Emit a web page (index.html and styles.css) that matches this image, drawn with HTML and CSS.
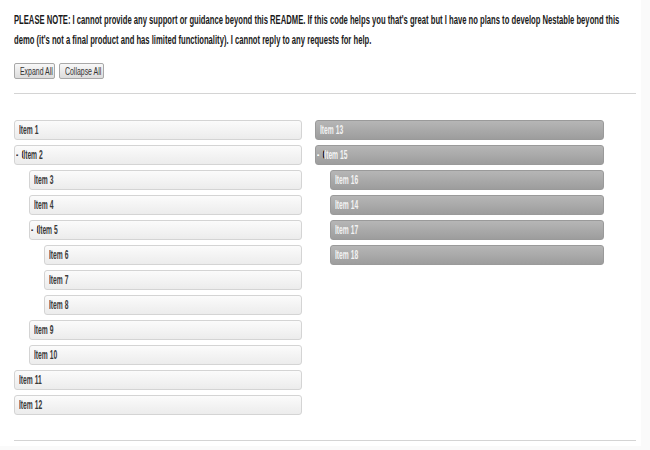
FILE: index.html
```
<!DOCTYPE html>
<html>
<head>
<meta charset="utf-8">
<link rel="stylesheet" href="styles.css">
</head>
<body>
<div class="page">
  <p class="note">PLEASE NOTE: I cannot provide any support or guidance beyond this README. If this code helps you that's great but I have no plans to develop Nestable beyond this<br>demo (it's not a final product and has limited functionality). I cannot reply to any requests for help.</p>
  <div class="actions">
    <button class="btn expand"><span class="sx">Expand All</span></button>
    <button class="btn collapse"><span class="sx">Collapse All</span></button>
  </div>
  <div class="rule"></div>
  <div class="lists">
    <ol class="dd">
      <li><div class="handle"><span class="sx">Item 1</span></div></li>
      <li><div class="handle parent"><span class="sx"><span class="toggle">-</span><span class="leak">C</span>Item 2</span></div>
        <ol class="dd">
          <li><div class="handle"><span class="sx">Item 3</span></div></li>
          <li><div class="handle"><span class="sx">Item 4</span></div></li>
          <li><div class="handle parent"><span class="sx"><span class="toggle">-</span><span class="leak">C</span>Item 5</span></div>
            <ol class="dd">
              <li><div class="handle"><span class="sx">Item 6</span></div></li>
              <li><div class="handle"><span class="sx">Item 7</span></div></li>
              <li><div class="handle"><span class="sx">Item 8</span></div></li>
            </ol>
          </li>
          <li><div class="handle"><span class="sx">Item 9</span></div></li>
          <li><div class="handle"><span class="sx">Item 10</span></div></li>
        </ol>
      </li>
      <li><div class="handle"><span class="sx">Item 11</span></div></li>
      <li><div class="handle"><span class="sx">Item 12</span></div></li>
    </ol>
    <ol class="dd dark">
      <li><div class="handle"><span class="sx">Item 13</span></div></li>
      <li><div class="handle parent"><span class="sx"><span class="toggle">-</span><span class="leak">C</span>Item 15</span></div>
        <ol class="dd">
          <li><div class="handle"><span class="sx">Item 16</span></div></li>
          <li><div class="handle"><span class="sx">Item 14</span></div></li>
          <li><div class="handle"><span class="sx">Item 17</span></div></li>
          <li><div class="handle"><span class="sx">Item 18</span></div></li>
        </ol>
      </li>
    </ol>
  </div>
  <div class="rule bottom"></div>
</div>
</body>
</html>
```
FILE: styles.css
```
html {
  background: #fafafa;
}
body {
  margin: 0;
  font-family: "Liberation Sans", Arial, sans-serif;
}
.page {
  width: 641px;
  height: 446px;
  box-sizing: border-box;
  background: #ffffff;
  padding: 10px 0 0 14px;
}
.sx {
  display: inline-block;
  transform: scaleX(0.56);
  transform-origin: 0 50%;
  white-space: nowrap;
}
.note {
  margin: 0;
  height: 40px;
  font-size: 12px;
  line-height: 20px;
  font-weight: bold;
  color: #1a1a1a;
  white-space: nowrap;
  transform: scaleX(0.637);
  transform-origin: 0 0;
}
.actions {
  display: flex;
  gap: 4px;
  margin-top: 13px;
}
.btn {
  height: 16px;
  padding: 0 0 0 5px;
  margin: 0;
  text-align: left;
  overflow: visible;
  font-family: inherit;
  font-size: 11px;
  line-height: 14px;
  color: #333;
  border: 1px solid #a8a8a8;
  border-radius: 2px;
  background: linear-gradient(#f8f8f8, #dcdcdc);
}
.btn .sx {
  transform: scaleX(0.63);
}
.btn.expand {
  width: 41px;
}
.btn.collapse {
  width: 45px;
}
.rule {
  width: 622px;
  height: 0;
  border-top: 1px solid #d4d4d4;
  margin-top: 14px;
}
.rule.bottom {
  margin-top: 20px;
}
.lists {
  display: grid;
  grid-template-columns: 288px 289px;
  column-gap: 13px;
  margin-top: 26px;
}
.dd {
  list-style: none;
  margin: 0;
  padding: 0;
}
.dd .dd {
  padding-left: 15px;
}
.handle {
  height: 20px;
  box-sizing: border-box;
  margin-bottom: 5px;
  padding: 0 4px;
  border: 1px solid #d4d4d4;
  border-radius: 3px;
  background: linear-gradient(#fbfbfb, #ececec);
  color: #3a3a3a;
  font-size: 12px;
  line-height: 18px;
  font-weight: bold;
  white-space: nowrap;
}
.handle.parent {
  padding-left: 1px;
}
.toggle {
  display: inline-block;
  margin-right: 6px;
  font-weight: bold;
}
.leak {
  display: inline-block;
  width: 3px;
  overflow: hidden;
  vertical-align: top;
  color: #111;
  font-weight: bold;
}
.dark .handle {
  border-color: #9a9a9a;
  background: linear-gradient(#b6b6b6, #9d9d9d);
  color: #f2f2f2;
}
.dark .toggle {
  color: #fff;
}
.dark .leak {
  color: #000;
}
```
